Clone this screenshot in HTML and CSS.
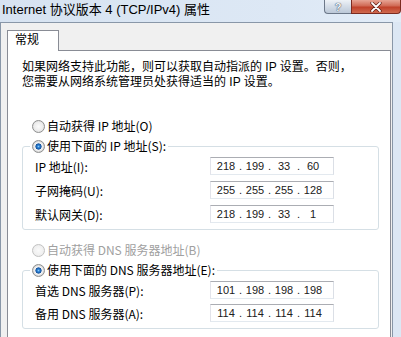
FILE: index.html
```html
<!DOCTYPE html>
<html>
<head>
  <meta charset="utf-8" />
  <title>Internet 协议版本 4 (TCP/IPv4) 属性</title>
  <link rel="stylesheet" href="styles.css">
</head>
<body>
  <div class="titlebar">
    <span class="title">Internet 协议版本 4 (TCP/IPv4) 属性</span>
    <div class="caption-buttons">
      <span class="cbtn help">?</span>
      <span class="cbtn close">
        <svg width="14" height="10" viewBox="0 0 14 10">
          <path d="M3 1 L11 9 M11 1 L3 9" stroke="#5a1a12" stroke-width="3.2" stroke-linecap="round" />
          <path d="M3 1 L11 9 M11 1 L3 9" stroke="#fff" stroke-width="1.8" stroke-linecap="round" />
        </svg>
      </span>
    </div>
  </div>

  <div class="dialog">
    <div class="tabs">
      <span class="tab active">常规</span>
    </div>
    <div class="panel">
      <p class="intro">如果网络支持此功能，则可以获取自动指派的 IP 设置。否则，<br>您需要从网络系统管理员处获得适当的 IP 设置。</p>

      <label class="option first"><span class="radio"></span>自动获得 IP 地址(O)</label>
      <fieldset class="group">
        <legend><label class="option"><span class="radio checked"></span>使用下面的 IP 地址(S):</label></legend>
        <div class="fields">
          <span>IP 地址(I):</span>
          <div class="ip"><span>218</span><i>.</i><span>199</span><i>.</i><span>33</span><i>.</i><span>60</span></div>
          <span>子网掩码(U):</span>
          <div class="ip"><span>255</span><i>.</i><span>255</span><i>.</i><span>255</span><i>.</i><span>128</span></div>
          <span>默认网关(D):</span>
          <div class="ip"><span>218</span><i>.</i><span>199</span><i>.</i><span>33</span><i>.</i><span>1</span></div>
        </div>
      </fieldset>

      <label class="option second disabled"><span class="radio"></span>自动获得 DNS 服务器地址(B)</label>
      <fieldset class="group dns">
        <legend><label class="option"><span class="radio checked"></span>使用下面的 DNS 服务器地址(E):</label></legend>
        <div class="fields">
          <span>首选 DNS 服务器(P):</span>
          <div class="ip"><span>101</span><i>.</i><span>198</span><i>.</i><span>198</span><i>.</i><span>198</span></div>
          <span>备用 DNS 服务器(A):</span>
          <div class="ip"><span>114</span><i>.</i><span>114</span><i>.</i><span>114</span><i>.</i><span>114</span></div>
        </div>
      </fieldset>
    </div>
  </div>
</body>
</html>
```

FILE: styles.css
```css
body {
  margin: 0;
  width: 401px;
  height: 337px;
  overflow: hidden;
  background: #dce7f4;
  font-family: "Noto Sans CJK SC", sans-serif;
  font-size: 12px;
  color: #000;
}
.titlebar {
  height: 22px;
  display: flex;
  justify-content: space-between;
  align-items: flex-start;
  background: linear-gradient(90deg, #d7e3f1, #dde8f5 70%, #e2ecf7);
}
.title {
  font-family: "Liberation Sans", "Noto Sans CJK SC", sans-serif;
  font-size: 13px;
  line-height: 20px;
  padding-left: 2px;
}
.caption-buttons {
  display: flex;
}
.cbtn {
  height: 13px;
  display: flex;
  align-items: center;
  justify-content: center;
  border: 1px solid #6c7889;
  border-top: 0;
}
.help {
  width: 26px;
  border-right: 0;
  border-radius: 0 0 0 4px;
  background: linear-gradient(#eef2f7, #d3dce7 50%, #bcc8d7);
  color: #f4f6f9;
  font: bold 11px "Liberation Sans", sans-serif;
  text-shadow: 0 0 1px #39465a, 0 0 1px #39465a;
}
.close {
  width: 48px;
  border-color: #7b2b20;
  border-radius: 0 0 4px 0;
  background: linear-gradient(#e7a595, #d06a55 45%, #c0412a 55%, #cf6a4f);
}
.dialog {
  margin-right: 8px;
  border: 1px solid #8997a8;
  border-bottom: 0;
  background: #f0f0f0;
  padding: 7px 1px 0 6px;
}
.tabs {
  display: flex;
}
.tab {
  width: 52px;
  height: 21px;
  box-sizing: border-box;
  padding: 0 0 4px 7px;
  line-height: 16px;
  display: flex;
  align-items: flex-end;
  border: 1px solid #898c95;
  border-bottom: 0;
  background: #fff;
  margin-bottom: -1px;
  position: relative;
}
.panel {
  border: 1px solid #898c95;
  background: #fff;
  padding: 9px 0 20px 14px;
}
.intro {
  margin: 0;
  font-family: "Liberation Sans", "Noto Sans CJK SC", sans-serif;
  line-height: 15px;
}
.option {
  display: flex;
  align-items: center;
  height: 16px;
  line-height: 16px;
  white-space: nowrap;
}
.option.first {
  margin-top: 28px;
  padding-left: 10px;
}
.option.second {
  margin-top: 12px;
  padding-left: 10px;
}
.option.disabled {
  color: #a0a0a0;
}
.radio {
  width: 13px;
  height: 13px;
  box-sizing: border-box;
  margin-right: 2px;
  border-radius: 50%;
  border: 1px solid #8e8f8f;
  background: radial-gradient(circle, #fbfbfb 0, #ececec 55%, #cfcfcf 100%);
}
.radio.checked {
  background: radial-gradient(circle, #8cc8f6 0, #2f85d6 1.2px, #11509d 2.8px, #f7f7f7 3.4px, #e6e6e6 4.6px, #cacaca 6px);
}
.disabled .radio {
  border-color: #c2c2c2;
  background: radial-gradient(circle, #fafafa 0, #f0f0f0 60%, #e0e0e0 100%);
}
.group {
  width: 357px;
  box-sizing: border-box;
  margin: 4px 0 0 0;
  border: 1px solid #d5dfe5;
  border-radius: 3px;
  padding: 3px 0 6px 7px;
}
.group legend {
  padding: 0 2px;
}
.fields {
  display: grid;
  grid-template-columns: 175px 124px;
  row-gap: 6px;
  align-items: center;
  padding-left: 5px;
}
.dns .fields {
  row-gap: 5px;
}
.ip {
  height: 18px;
  box-sizing: border-box;
  display: flex;
  align-items: center;
  padding-left: 3px;
  border: 1px solid;
  border-color: #abadb3 #dbdfe6 #e3e9ef #e2e3ea;
  font-family: "Liberation Sans", sans-serif;
  font-size: 11px;
  color: #202020;
}
.ip span {
  width: 24px;
  text-align: center;
}
.ip i {
  width: 5px;
  font-style: normal;
  text-align: center;
}
```
